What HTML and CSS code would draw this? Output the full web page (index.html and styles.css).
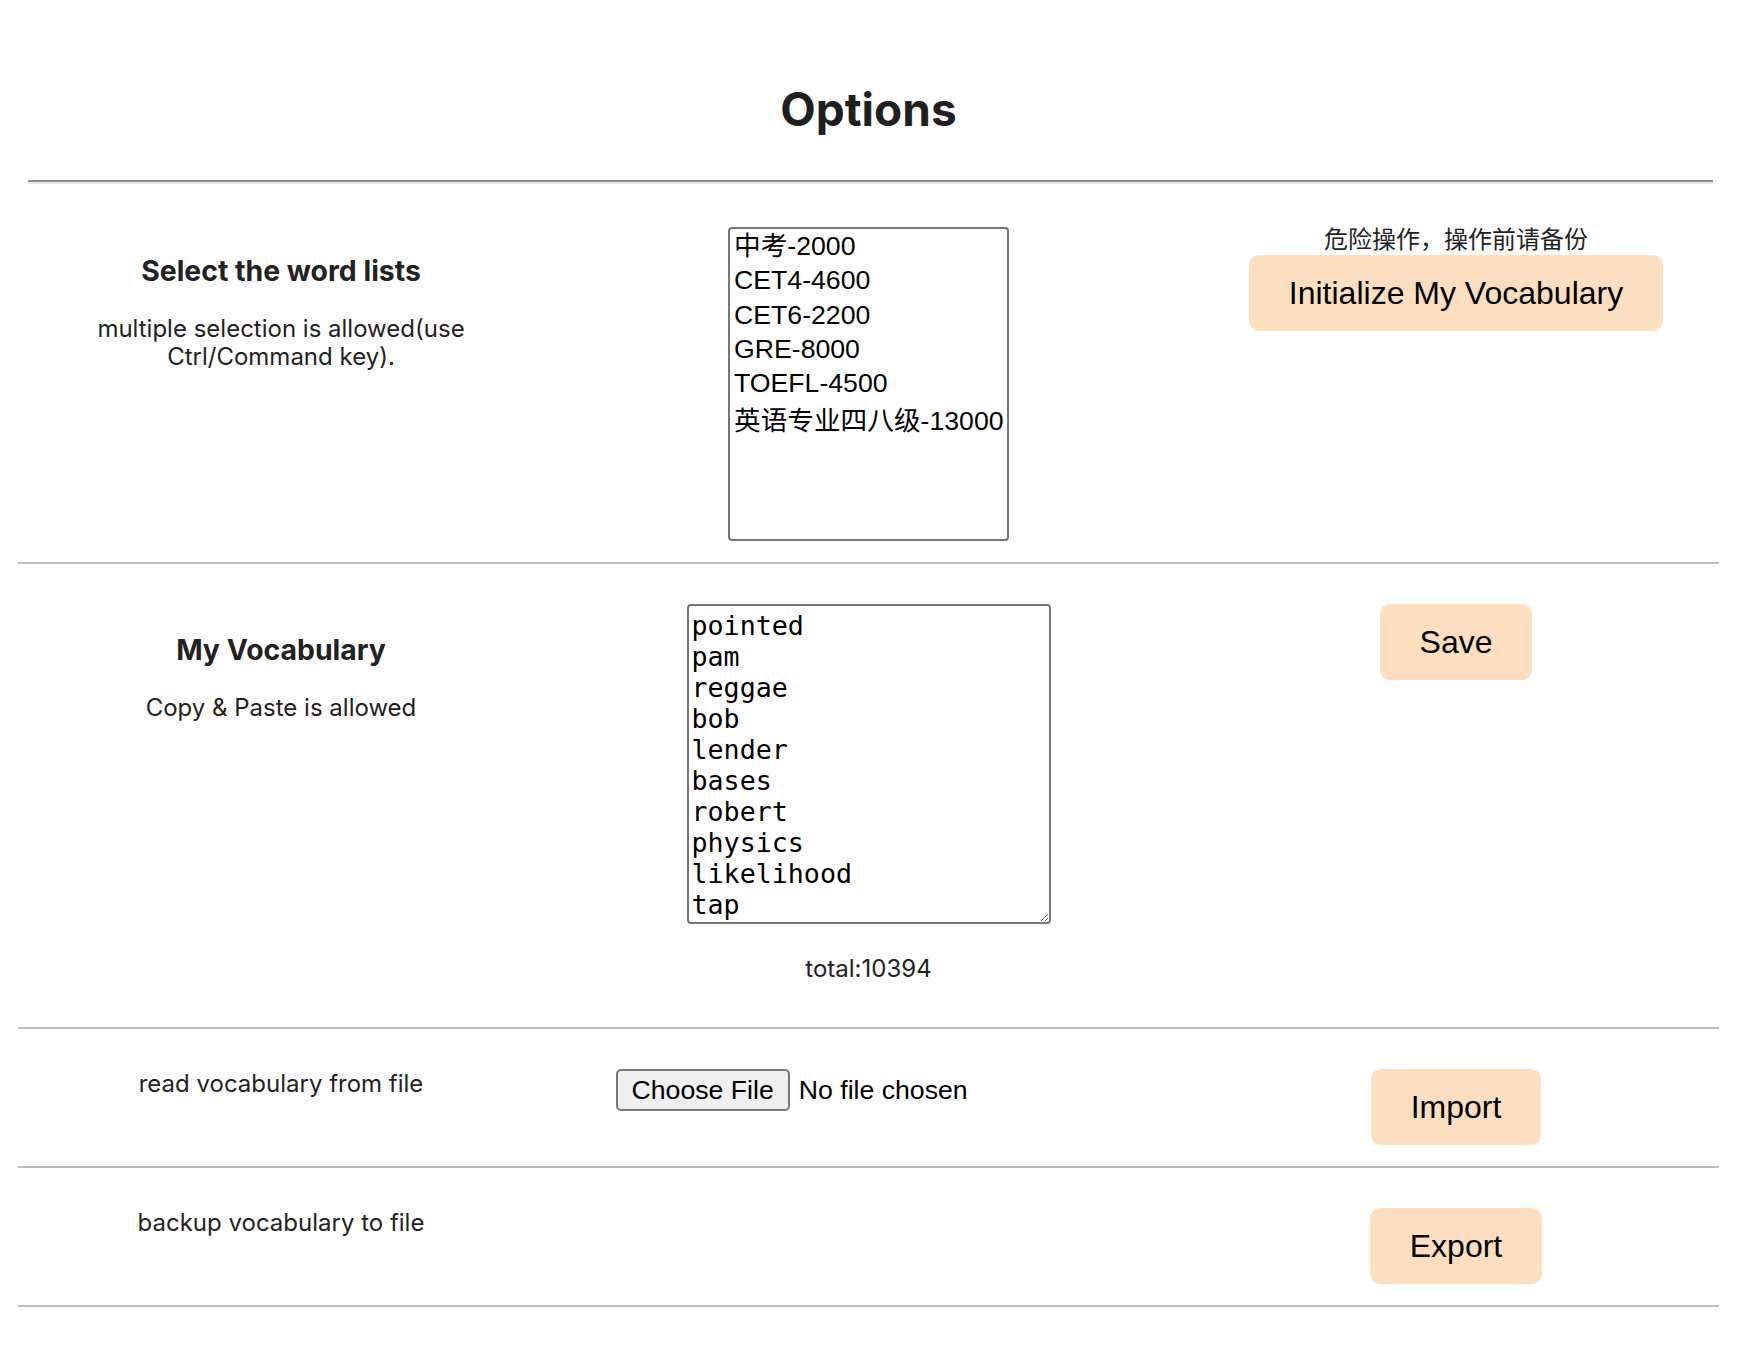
FILE: index.html
```html
<!DOCTYPE html>
<html lang="en">
<head>
<meta charset="utf-8">
<title>Options</title>
<link rel="stylesheet" href="styles.css">
</head>
<body>
<main class="page">
  <header class="page-header">
    <h1 class="title">Options</h1>
    <hr class="divider">
  </header>

  <section class="row">
    <div class="col col-label">
      <h2 class="label-title">Select the word lists</h2>
      <p class="label-note">multiple selection is allowed(use Ctrl/Command key).</p>
    </div>
    <div class="col col-mid">
      <div class="listbox" role="listbox" aria-multiselectable="true">
        <div class="opt" role="option">中考-2000</div>
        <div class="opt" role="option">CET4-4600</div>
        <div class="opt" role="option">CET6-2200</div>
        <div class="opt" role="option">GRE-8000</div>
        <div class="opt" role="option">TOEFL-4500</div>
        <div class="opt opt-tall" role="option">英语专业四八级-13000</div>
      </div>
    </div>
    <div class="col col-action">
      <p class="warn">危险操作，操作前请备份</p>
      <button class="btn btn-init">Initialize My Vocabulary</button>
    </div>
  </section>

  <section class="row">
    <div class="col col-label">
      <h2 class="label-title">My Vocabulary</h2>
      <p class="label-note">Copy &amp; Paste is allowed</p>
    </div>
    <div class="col col-mid">
      <textarea class="vocab" spellcheck="false">pointed
pam
reggae
bob
lender
bases
robert
physics
likelihood
tap</textarea>
      <p class="total">total:10394</p>
    </div>
    <div class="col col-action">
      <button class="btn">Save</button>
    </div>
  </section>

  <section class="row">
    <div class="col col-label">
      <p class="plain-label">read vocabulary from file</p>
    </div>
    <div class="col col-mid">
      <div class="file-picker">
        <label class="file-btn">Choose File</label>
        <span class="file-status">No file chosen</span>
      </div>
    </div>
    <div class="col col-action">
      <button class="btn">Import</button>
    </div>
  </section>

  <section class="row">
    <div class="col col-label">
      <p class="plain-label">backup vocabulary to file</p>
    </div>
    <div class="col col-mid"></div>
    <div class="col col-action">
      <button class="btn">Export</button>
    </div>
  </section>
</main>
</body>
</html>
```

FILE: styles.css
```css
* {
  box-sizing: border-box;
}

body {
  margin: 0;
  background: #ffffff;
  color: #222222;
  font-family: Inter, "Noto Sans CJK SC", sans-serif;
}

.page {
  margin: 0 41px 0 18px;
  padding-bottom: 60px;
}

.page-header {
  padding-top: 81px;
}

.title {
  margin: 0;
  text-align: center;
  font-size: 46px;
  line-height: 56px;
  font-weight: 700;
  color: #1f1f1f;
}

.divider {
  margin: 43px 6px 0 10px;
  height: 0;
  border: 0;
  border-top: 2px solid #8c8c8c;
  border-bottom: 2px solid #e4e4e4;
}

.row {
  display: grid;
  grid-template-columns: repeat(3, 1fr);
  column-gap: 61.5px;
  align-items: start;
  padding: 40px 0 21px;
  border-bottom: 2px solid #bcbcbc;
}

.row:first-of-type {
  padding-top: 41px;
}

.col-label {
  text-align: center;
}

.label-title {
  margin: 0;
  padding-top: 29px;
  font-size: 28.4px;
  line-height: 34px;
  font-weight: 700;
}

.label-note {
  margin: 27px auto 0;
  max-width: 440px;
  font-size: 24px;
  line-height: 28px;
}

.plain-label {
  margin: 0;
  padding-top: 1px;
  font-size: 24px;
  line-height: 28px;
}

.col-mid,
.col-action {
  display: flex;
  flex-direction: column;
  align-items: center;
}

.listbox {
  margin-top: 2px;
  width: 281px;
  height: 314px;
  padding-top: 0;
  border: 2px solid #767676;
  border-radius: 4px;
  background: #fff;
  color: #000;
  font-family: "Liberation Sans", "Noto Sans CJK SC", sans-serif;
  font-size: 26.67px;
  overflow: hidden;
}

.opt {
  padding: 0 4px;
  line-height: 34.25px;
  white-space: nowrap;
}

.opt-tall {
  padding-top: 4px;
}

.vocab {
  display: block;
  margin: 0;
  width: 364px;
  height: 320px;
  padding: 4px 3px;
  border: 2px solid #767676;
  border-radius: 4px;
  background: #fff;
  color: #000;
  font-family: "DejaVu Sans Mono", monospace;
  font-size: 26.67px;
  line-height: 31px;
  overflow: hidden;
  resize: both;
}

.total {
  margin: 31px 0 23px;
  font-size: 24px;
  line-height: 28px;
}

.warn {
  margin: -1px 0 3px;
  font-family: "Noto Sans CJK SC", sans-serif;
  font-size: 24px;
  line-height: 28px;
}

.btn {
  border: 0;
  border-radius: 10px;
  background: #fddfc0;
  color: #000;
  font-family: "Liberation Sans", Arial, sans-serif;
  font-size: 32px;
  line-height: 36px;
  padding: 20px 40px;
  cursor: pointer;
}

.file-picker {
  align-self: flex-start;
  margin: 0 0 0 10px;
  display: flex;
  align-items: center;
  gap: 9px;
  font-family: "Liberation Sans", Arial, sans-serif;
  font-size: 26.67px;
  color: #000;
}

.file-btn {
  display: inline-flex;
  align-items: center;
  height: 42px;
  padding: 0 14px;
  line-height: 31px;
  border: 2px solid #767676;
  border-radius: 5px;
  background: #efefef;
}

.file-status {
  line-height: 31px;
}
```
